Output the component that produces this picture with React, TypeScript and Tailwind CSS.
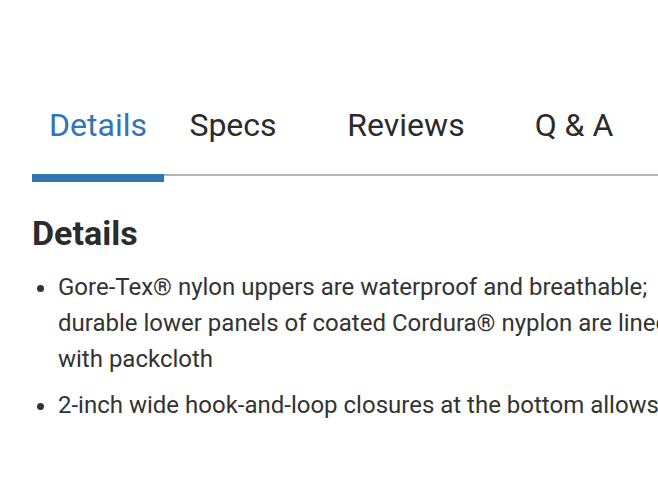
const tabs = [
  { label: "Details", w: "w-[132px]" },
  { label: "Specs", w: "w-[138px]" },
  { label: "Reviews", w: "w-[208px]" },
  { label: "Q & A", w: "w-[128px]" },
];

const details = [
  "Gore-Tex® nylon uppers are waterproof and breathable; durable lower panels of coated Cordura® nyplon are lined with packcloth",
  "2-inch wide hook-and-loop closures at the bottom allows",
];

export default function App() {
  return (
    <div className="h-[494px] w-[658px] overflow-hidden bg-white font-['Roboto',sans-serif] text-[#333]">
      <div className="w-[722px] px-8 pt-[101px]">
        {/* tab strip */}
        <div className="flex border-b-2 border-[#b5b5b5] pb-[25px]">
          {tabs.map((t, i) => (
            <div
              key={t.label}
              className={`relative ${t.w} text-center text-[32px] leading-[48px] ${
                i === 0 ? "text-[#3176b3]" : "text-[#2b2b2b]"
              }`}
            >
              {t.label}
              {i === 0 && (
                <div className="absolute left-0 top-[calc(100%+25px)] h-[8px] w-full bg-[#3176b3]" />
              )}
            </div>
          ))}
        </div>

        <h2 className="mt-[37px] text-[34px] font-bold leading-[40px] text-[#2b2b2b]">
          Details
        </h2>

        <ul className="mt-[16px] list-disc space-y-[10px] pl-[26px] text-[24px] leading-[36px]">
          {details.map((d) => (
            <li key={d}>{d}</li>
          ))}
        </ul>
      </div>
    </div>
  );
}
